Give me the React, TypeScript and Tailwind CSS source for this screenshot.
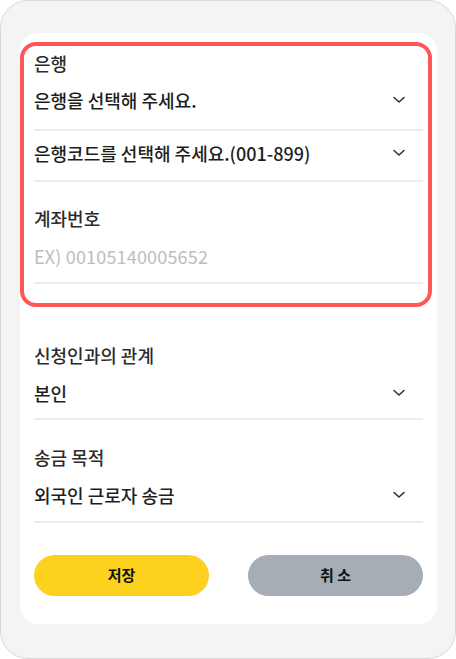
import React from "react";

const FONT = { fontFamily: '"Noto Sans CJK KR", "Noto Sans", sans-serif' };

function Chevron() {
  return (
    <svg width="14" height="8" viewBox="0 0 14 8" fill="none" className="mr-[17px] shrink-0">
      <path d="M2 1.5 L7 6 L12 1.5" stroke="#2a2a2a" strokeWidth="1.5" strokeLinecap="round" strokeLinejoin="round" />
    </svg>
  );
}

function Divider({ className = "" }: { className?: string }) {
  return <div className={`h-[2px] bg-[#ececec] ${className}`} />;
}

function Label({ children, className = "" }: { children: React.ReactNode; className?: string }) {
  return <p className={`text-[18px] leading-[24px] font-medium text-[#2c2c2c] ${className}`}>{children}</p>;
}

function SelectRow({ text, className = "" }: { text: string; className?: string }) {
  return (
    <div className={`flex items-center justify-between h-[24px] ${className}`}>
      <span className="text-[18px] leading-[24px] font-medium text-[#1e1e1e]">{text}</span>
      <Chevron />
    </div>
  );
}

export default function App() {
  return (
    <div style={FONT} className="w-[456px] h-[659px] bg-[#f4f4f4] border border-[#d8d8d8] rounded-[28px] pl-[19px] pr-[18px] pt-[32px]">
      <div className="bg-white rounded-[18px] pt-[9px] pb-[28px] px-[14px]">
        {/* highlighted bank block */}
        <div className="-ml-[14px] -mr-[9px] border-4 border-[#ff5757] rounded-[16px] pl-[10px] pr-[5px] pt-[5px] pb-[19px]">
          <Label>은행</Label>
          <SelectRow text="은행을 선택해 주세요." className="mt-[13px]" />
          <Divider className="mt-[17px]" />
          <SelectRow text="은행코드를 선택해 주세요.(001-899)" className="mt-[10px]" />
          <Divider className="mt-[15px]" />
          <Label className="mt-[24px]">계좌번호</Label>
          <input
            type="text"
            placeholder="EX) 00105140005652"
            className="mt-[14px] block w-full h-[24px] text-[18px] leading-[24px] tracking-[0.01em] outline-none placeholder:text-[#bdbdbd] bg-transparent"
          />
          <Divider className="mt-[14px]" />
        </div>

        <Label className="mt-[36px]">신청인과의 관계</Label>
        <SelectRow text="본인" className="mt-[14px]" />
        <Divider className="mt-[13px]" />

        <Label className="mt-[25px]">송금 목적</Label>
        <SelectRow text="외국인 근로자 송금" className="mt-[14px]" />
        <Divider className="mt-[14px]" />

        <div className="grid grid-cols-2 gap-[39px] mt-[32px]">
          <button className="h-[41px] rounded-full bg-[#fdd21f] text-[15px] font-bold text-[#111]">저장</button>
          <button className="h-[41px] rounded-full bg-[#a6adb4] text-[15px] font-bold text-[#111]">취 소</button>
        </div>
      </div>
    </div>
  );
}
